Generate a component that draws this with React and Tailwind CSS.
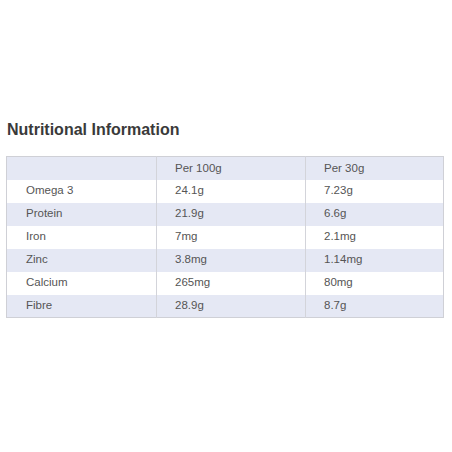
const rows = [
  ['Omega 3', '24.1g', '7.23g'],
  ['Protein', '21.9g', '6.6g'],
  ['Iron', '7mg', '2.1mg'],
  ['Zinc', '3.8mg', '1.14mg'],
  ['Calcium', '265mg', '80mg'],
  ['Fibre', '28.9g', '8.7g'],
]

export default function App() {
  return (
    <div className="w-[452px] h-[452px] bg-white font-['Liberation_Sans',Arial,sans-serif]">
      <div className="pt-[120px] pl-[6px]">
        <h2 className="text-[16px] font-bold text-[#3a3a3a] leading-[20px] pl-[1px]">Nutritional Information</h2>
        <table className="mt-[16px] w-[438px] border-collapse border border-[#cfd0d6] text-[11.5px] text-[#555]">
          <colgroup>
            <col className="w-[150px]" />
            <col className="w-[149px]" />
            <col />
          </colgroup>
          <thead>
            <tr className="bg-[#e5e8f4] h-[23px]">
              <th className="font-normal text-left pl-[18px]"></th>
              <th className="font-normal text-left pl-[18px] border-l border-[#d3d4da]">Per 100g</th>
              <th className="font-normal text-left pl-[18px] border-l border-[#d3d4da]">Per 30g</th>
            </tr>
          </thead>
          <tbody>
            {rows.map((r, i) => (
              <tr key={r[0]} className={`h-[23px] ${i % 2 ? 'bg-[#e5e8f4]' : 'bg-white'}`}>
                <td className="pl-[19px]">{r[0]}</td>
                <td className="pl-[18px] border-l border-[#d3d4da]">{r[1]}</td>
                <td className="pl-[18px] border-l border-[#d3d4da]">{r[2]}</td>
              </tr>
            ))}
          </tbody>
        </table>
      </div>
    </div>
  )
}
